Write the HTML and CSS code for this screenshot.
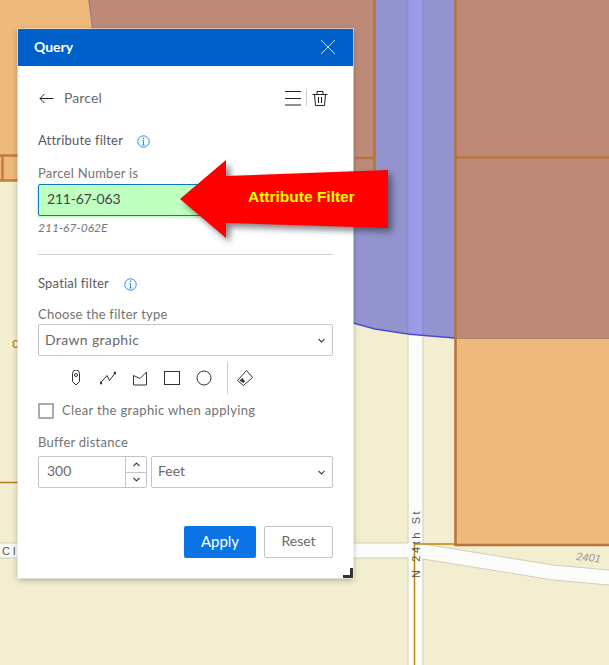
FILE: index.html
```html
<!DOCTYPE html>
<html lang="en">

<head>
    <meta charset="UTF-8">
    <title>Query</title>
    <link rel="stylesheet" href="styles.css">
</head>

<body>
    <!-- map drawn as one canvas -->
    <svg class="map" width="609" height="665" viewBox="0 0 609 665">
        <rect width="609" height="665" fill="#f3eecf" />
        <path d="M0 0H89L96 60V180H0Z" fill="#eeb97b" />
        <path d="M89 0H375V200H96V60Z" fill="#bd8a78" />
        <path d="M89 0L93 32" stroke="#a87a8e" stroke-width="1.500" fill="none" />
        <path d="M0 155.500H96M0 180.500H96M2.500 156V180" stroke="#bd7c3f" stroke-width="2.500" fill="none" />
        <path d="M355 158H374.500" stroke="#b8743f" stroke-width="2.500" />
        <path d="M375 0H455V338.500L430 336L408 334L375 329L353 323V200H375Z" fill="#9393cf" />
        <rect x="408" width="15" height="335" fill="#9a9ae4" />
        <path d="M408 0V334M423 0V335" stroke="#8585d6" stroke-width="1" />
        <path d="M353 323L375 329L408 334L430 336L455 338" stroke="#4b4bd0" stroke-width="1.500" fill="none" />
        <path d="M374.500 0V170" stroke="#b8743f" stroke-width="2.500" />
        <rect x="456" width="153" height="338" fill="#bd8a78" />
        <path d="M456 157.500H609" stroke="#b8743f" stroke-width="2.500" />
        <path d="M456 338.500H609" stroke="#b08268" stroke-width="1" />
        <rect x="456" y="339" width="153" height="206" fill="#eeb97b" />
        <path d="M455.500 0V545H609" stroke="#b8743f" stroke-width="2.500" fill="none" />
        <path d="M0 482.500H18" stroke="#b5791f" stroke-width="1.500" />
        <path d="M0 543H408V336H423V544L553 565L609 570V585L553 580L423 559V665H408V558H0Z" fill="#fcfcfa" />
        <path d="M0 543H408V336M423 336V544L553 565L609 570M609 585L553 580L423 559V665M408 665V558H0" stroke="#cfcdbd" stroke-width="1" fill="none" />
        <path d="M414.500 665V544H455" stroke="#b8860b" stroke-width="1.500" fill="none" />
        <text class="map-label road-left" x="2" y="555">Clo</text>
        <text class="map-parcel" x="12" y="348">c</text>
        <text class="map-label road-up" transform="translate(420 578) rotate(-90)">N 24th St</text>
        <text class="map-number" transform="translate(576 560) rotate(6)">2401</text>
    </svg>

    <div class="panel">
        <div class="panel-head">
            <span class="panel-title">Query</span>
            <svg class="close" width="14" height="14" viewBox="0 0 14 14">
                <path d="M0 0L14 14M14 0L0 14" />
            </svg>
        </div>
        <div class="panel-body">
            <div class="layer-row">
                <svg class="icon back" width="16" height="16" viewBox="0 0 16 16">
                    <path d="M14.500 8.500H1M5.500 4L1 8.500L5.500 13" />
                </svg>
                <span class="layer-name">Parcel</span>
                <svg class="icon" width="16" height="16" viewBox="0 0 16 16">
                    <path d="M0 1.500H16M0 8.500H16M0 15H16" />
                </svg>
                <span class="tool-sep"></span>
                <svg class="icon" width="16" height="16" viewBox="0 0 16 16">
                    <path d="M0.500 4.500H15.500M5 4.500V1.500H11V4.500M2.500 4.500L3.500 15.500H12.500L13.500 4.500M6.500 7V13M9.500 7V13" />
                </svg>
            </div>

            <div class="filter-title first">
                <span>Attribute filter</span>
                <svg class="info" width="13" height="13" viewBox="0 0 13 13">
                    <circle cx="6.500" cy="6.500" r="5.700" />
                    <path d="M6.500 5.500V10M5.300 10H7.700M5.500 5.500H6.500" />
                    <circle class="dot" cx="6.500" cy="3.400" r="0.800" />
                </svg>
            </div>
            <div class="field-label attr-label">Parcel Number is</div>
            <div class="box green">211-67-063</div>
            <div class="hint">211-67-062E</div>
            <div class="divider"></div>

            <div class="filter-title second">
                <span>Spatial filter</span>
                <svg class="info" width="13" height="13" viewBox="0 0 13 13">
                    <circle cx="6.500" cy="6.500" r="5.700" />
                    <path d="M6.500 5.500V10M5.300 10H7.700M5.500 5.500H6.500" />
                    <circle class="dot" cx="6.500" cy="3.400" r="0.800" />
                </svg>
            </div>
            <div class="field-label type-label">Choose the filter type</div>
            <div class="box select">
                <span class="select-text">Drawn graphic</span>
                <svg class="chevron" width="7" height="5" viewBox="0 0 7 5"><path d="M0.500 1L3.500 4L6.500 1" /></svg>
            </div>

            <div class="draw-tools">
                <span class="slot">
                    <svg class="icon thin" width="16" height="16" viewBox="0 0 16 16">
                        <path d="M4.500 3.500A3.500 3.500 0 0 1 11.500 3.500V11.500L8 15L4.500 11.500Z" />
                        <circle cx="8" cy="5" r="1.500" />
                    </svg>
                </span>
                <span class="slot">
                    <svg class="icon thin" width="16" height="16" viewBox="0 0 16 16">
                        <path d="M0.500 13L7 5.500L9.500 10.500L15 3" />
                        <circle class="dot" cx="0.800" cy="13" r="1" />
                        <circle class="dot" cx="15" cy="3" r="1" />
                    </svg>
                </span>
                <span class="slot">
                    <svg class="icon thin" width="16" height="16" viewBox="0 0 16 16">
                        <path d="M1.500 5.500L8 8.500L14.500 2V15H1.500Z" />
                    </svg>
                </span>
                <span class="slot">
                    <svg class="icon thin" width="16" height="16" viewBox="0 0 16 16">
                        <rect x="0.500" y="1.500" width="15" height="13" />
                    </svg>
                </span>
                <span class="slot">
                    <svg class="icon thin" width="16" height="16" viewBox="0 0 16 16">
                        <circle cx="8" cy="8" r="7" />
                    </svg>
                </span>
                <span class="draw-sep"></span>
                <svg class="icon thin eraser" width="16" height="16" viewBox="0 0 16 16">
                    <path d="M9.500 0.500L15.500 7.500L6.500 15.500L0.500 10.500Z" />
                    <path class="fill" d="M2.500 10.500L5.500 8L8 11.500L6.500 13Z" />
                </svg>
            </div>

            <div class="check-row">
                <span class="checkbox"></span>
                <span class="check-text">Clear the graphic when applying</span>
            </div>

            <div class="field-label buffer-label">Buffer distance</div>
            <div class="buffer-row">
                <div class="box number">
                    <span class="number-value">300</span>
                    <div class="spinner">
                        <span><svg class="chevron" width="7" height="5" viewBox="0 0 7 5"><path d="M0.500 4L3.500 1L6.500 4" /></svg></span>
                        <span><svg class="chevron" width="7" height="5" viewBox="0 0 7 5"><path d="M0.500 1L3.500 4L6.500 1" /></svg></span>
                    </div>
                </div>
                <div class="box select unit">
                    <span class="select-text">Feet</span>
                    <svg class="chevron" width="7" height="5" viewBox="0 0 7 5"><path d="M0.500 1L3.500 4L6.500 1" /></svg>
                </div>
            </div>

            <div class="actions">
                <button class="btn apply">Apply</button>
                <button class="btn reset">Reset</button>
            </div>
        </div>
        <span class="resize"></span>
    </div>

    <!-- red callout on top of the panel -->
    <div class="callout">
        <svg width="230" height="100" viewBox="0 0 230 100">
            <path d="M2 61L48 22V38L210 32V90L48 85V100L2 61Z" fill="#ff0000" />
        </svg>
        <span class="callout-text">Attribute Filter</span>
    </div>
</body>

</html>
```

FILE: styles.css
```css
body {
    margin: 0;
    width: 609px;
    height: 665px;
    overflow: hidden;
    font-family: "Lato", "Noto Sans", sans-serif;
    color: #6a6a6a;
}

.map {
    position: absolute;
    left: 0;
    top: 0;
}

.map-label {
    font-family: "Liberation Sans", sans-serif;
    font-size: 11px;
    fill: #555;
}

.road-left {
    letter-spacing: 3px;
}

.road-up {
    letter-spacing: 2.600px;
}

.map-parcel {
    font-family: "Liberation Sans", sans-serif;
    font-size: 14px;
    fill: #b5791f;
}

.map-number {
    font-family: "Liberation Sans", sans-serif;
    font-size: 11px;
    font-style: italic;
    fill: #999;
}

.panel {
    position: absolute;
    left: 18px;
    top: 29px;
    width: 335px;
    height: 549px;
    background: white;
    display: flex;
    flex-direction: column;
    box-shadow: 0 0 0 1px rgba(255, 255, 255, 0.5), 0 2px 6px rgba(0, 0, 0, 0.3);
}

.panel-head {
    height: 37px;
    box-sizing: border-box;
    flex: none;
    background: #0060c9;
    display: flex;
    align-items: center;
    justify-content: space-between;
    padding: 0 18px 2px 16px;
}

.panel-title {
    color: white;
    font-size: 14px;
    font-weight: 700;
}

.close path {
    stroke: #cfe0f5;
    stroke-width: 1;
    fill: none;
}

.panel-body {
    flex: 1;
    display: flex;
    flex-direction: column;
    padding: 20px;
}

.icon path,
.icon circle,
.icon rect {
    fill: none;
    stroke: #222;
    stroke-width: 1;
}

.icon.thin path,
.icon.thin circle,
.icon.thin rect {
    stroke: #333;
}

.icon .dot,
.icon.thin .dot {
    fill: #222;
}

.icon.thin .fill {
    fill: #333;
    stroke: none;
}

.layer-row {
    height: 24px;
    display: flex;
    align-items: center;
    padding-right: 5px;
}

.back {
    margin-left: 1px;
}

.layer-name {
    font-size: 14px;
    margin-left: 9px;
    margin-bottom: 2px;
    flex: 1;
    letter-spacing: 0.100px;
}

.tool-sep {
    width: 1px;
    height: 16px;
    background: #ccc;
    margin: 0 5px;
}

.filter-title {
    height: 20px;
    display: flex;
    align-items: center;
    font-size: 13px;
    letter-spacing: 0.200px;
    color: #5a5a5a;
}

.filter-title span {
    margin-bottom: 2px;
}

.filter-title.first {
    margin-top: 21px;
}

.filter-title.second {
    margin-top: 19px;
}

.info {
    margin-left: 14px;
}

.second .info {
    margin-left: 15px;
}

.info circle,
.info path {
    fill: none;
    stroke: #2e8ae6;
    stroke-width: 1;
}

.info .dot {
    fill: #2e8ae6;
    stroke: none;
}

.field-label {
    height: 20px;
    line-height: 20px;
    font-size: 13px;
    letter-spacing: 0.250px;
    color: #737373;
}

.attr-label {
    margin-top: 12px;
    margin-bottom: 1px;
}

.type-label {
    margin-top: 10px;
}

.buffer-label {
    margin-top: 13px;
    margin-bottom: 4px;
}

.box {
    height: 32px;
    box-sizing: border-box;
    border: 1px solid #c4c4c4;
    border-radius: 2px;
    font-size: 14px;
    display: flex;
    align-items: center;
    flex: none;
}

.green {
    background: #bfffbf;
    border-color: #0a78c2;
    padding: 0 0 4px 8px;
    color: #444;
    letter-spacing: -0.200px;
    box-shadow: -1px 2px 0 #c8fcc8;
}

.hint {
    height: 18px;
    line-height: 18px;
    margin-top: 3px;
    font-size: 12px;
    font-style: italic;
    color: #777;
}

.divider {
    height: 1px;
    background: #d0d0d0;
    margin-top: 17px;
}

.select {
    justify-content: space-between;
    padding: 0 7px 0 6px;
}

.select-text {
    margin-bottom: 2px;
    letter-spacing: 0.350px;
}

.unit .select-text {
    letter-spacing: 0;
    margin-bottom: 3px;
}

.chevron path {
    fill: none;
    stroke: #444;
    stroke-width: 1.100;
}

.draw-tools {
    height: 32px;
    margin-top: 6px;
    padding-left: 22px;
    display: flex;
    align-items: center;
}

.slot {
    width: 32px;
    display: flex;
    justify-content: center;
}

.draw-sep {
    width: 1px;
    height: 32px;
    background: #ccc;
    margin-left: 7px;
}

.eraser {
    margin-left: 9px;
}

.check-row {
    height: 16px;
    margin-top: 9px;
    display: flex;
    align-items: center;
    font-size: 13px;
    color: #737373;
}

.check-text {
    letter-spacing: 0.350px;
    margin-bottom: 2px;
}

.checkbox {
    width: 16px;
    height: 16px;
    box-sizing: border-box;
    border: 2px solid #aaa;
    border-radius: 1px;
    margin-right: 8px;
}

.buffer-row {
    display: flex;
    gap: 4px;
}

.number {
    width: 109px;
}

.number-value {
    flex: 1;
    padding-left: 8px;
    margin-bottom: 3px;
}

.spinner {
    width: 20px;
    height: 100%;
    border-left: 1px solid #c4c4c4;
    display: flex;
    flex-direction: column;
}

.spinner span {
    flex: 1;
    display: flex;
    align-items: center;
    justify-content: center;
}

.spinner span + span {
    border-top: 1px solid #c4c4c4;
}

.unit {
    flex: 1;
}

.actions {
    margin-top: auto;
    display: flex;
    justify-content: flex-end;
    gap: 8px;
}

.btn {
    height: 32px;
    box-sizing: border-box;
    font-family: inherit;
    font-size: 14px;
    border-radius: 2px;
    padding: 0 0 3px;
}

.apply {
    width: 72px;
    background: #0a74e6;
    border: none;
    color: white;
    font-size: 15px;
}

.reset {
    width: 69px;
    background: white;
    border: 1px solid #c4c4c4;
    color: #6a6a6a;
}

.resize {
    position: absolute;
    right: 0;
    bottom: 0;
    width: 7px;
    height: 7px;
    border-right: 3px solid #333;
    border-bottom: 3px solid #333;
}

.callout {
    position: absolute;
    left: 178px;
    top: 138px;
    width: 230px;
    height: 100px;
}

.callout svg {
    filter: drop-shadow(4px 4px 3px rgba(50, 50, 60, 0.6));
}

.callout-text {
    position: absolute;
    left: 70px;
    top: 50px;
    font-family: "Liberation Sans", sans-serif;
    font-size: 15.500px;
    font-weight: 700;
    line-height: 18px;
    color: #ffff00;
}
```
